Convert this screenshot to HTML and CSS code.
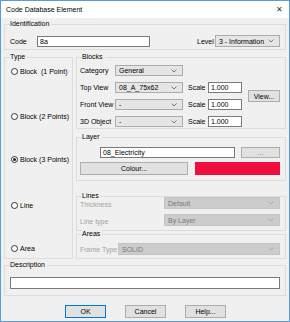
FILE: index.html
```html
<!DOCTYPE html>
<html>
<head>
<meta charset="utf-8">
<link rel="stylesheet" href="styles.css">
</head>
<body>
<div class="window">
  <div class="titlebar">
    <span class="title">Code Database Element</span>
    <span class="close">✕</span>
  </div>
  <div class="content">
    <div class="group ident">
      <span class="legend">Identification</span>
      <div class="row code-row">
        <span class="lbl code-lbl">Code</span>
        <div class="input code-input">8a</div>
        <span class="lbl level-lbl">Level</span>
        <div class="select level-select"><span>3 - Information</span><svg class="chev" viewBox="0 0 6 4"><path d="M0.5 0.5 L3 3 L5.5 0.5" /></svg></div>
      </div>
    </div>

    <div class="middle">
      <div class="group type">
        <span class="legend">Type</span>
        <label class="radio r1"><span class="dot"></span>Block&nbsp; (1 Point)</label>
        <label class="radio r2"><span class="dot"></span>Block (2 Points)</label>
        <label class="radio r3"><span class="dot on"></span>Block (3 Points)</label>
        <label class="radio r4"><span class="dot"></span>Line</label>
        <label class="radio r5"><span class="dot"></span>Area</label>
      </div>

      <div class="right">
        <div class="group blocks">
          <span class="legend">Blocks</span>
          <div class="bgrid">
            <span class="lbl">Category</span>
            <div class="select"><span>General</span><svg class="chev" viewBox="0 0 6 4"><path d="M0.5 0.5 L3 3 L5.5 0.5" /></svg></div>
            <span></span><span></span><span></span>

            <span class="lbl">Top View</span>
            <div class="select"><span>08_A_75x62</span><svg class="chev" viewBox="0 0 6 4"><path d="M0.5 0.5 L3 3 L5.5 0.5" /></svg></div>
            <span class="lbl scale">Scale</span>
            <div class="input">1.000</div>
            <div class="btn view">View...</div>

            <span class="lbl">Front View</span>
            <div class="select"><span>-</span><svg class="chev" viewBox="0 0 6 4"><path d="M0.5 0.5 L3 3 L5.5 0.5" /></svg></div>
            <span class="lbl scale">Scale</span>
            <div class="input">1.000</div>

            <span class="lbl">3D Object</span>
            <div class="select"><span>-</span><svg class="chev" viewBox="0 0 6 4"><path d="M0.5 0.5 L3 3 L5.5 0.5" /></svg></div>
            <span class="lbl scale">Scale</span>
            <div class="input">1.000</div>
          </div>
        </div>

        <div class="group layer">
          <span class="legend">Layer</span>
          <div class="row layer-row">
            <div class="input layer-input">08_Electricity</div>
            <div class="btn dots">...</div>
          </div>
          <div class="row colour-row">
            <div class="btn colour">Colour...</div>
            <div class="swatch"></div>
          </div>
        </div>

        <div class="group lines">
          <span class="legend">Lines</span>
          <div class="row lrow">
            <span class="lbl dis lines-lbl">Thickness</span>
            <div class="select disabled lines-sel"><span>Default</span><svg class="chev" viewBox="0 0 6 4"><path d="M0.5 0.5 L3 3 L5.5 0.5" /></svg></div>
          </div>
          <div class="row lrow second">
            <span class="lbl dis lines-lbl">Line type</span>
            <div class="select disabled lines-sel"><span>By Layer</span><svg class="chev" viewBox="0 0 6 4"><path d="M0.5 0.5 L3 3 L5.5 0.5" /></svg></div>
          </div>
        </div>

        <div class="group areas">
          <span class="legend">Areas</span>
          <div class="row arow">
            <span class="lbl dis areas-lbl">Frame Type</span>
            <div class="select disabled areas-sel"><span>SOLID</span><svg class="chev" viewBox="0 0 6 4"><path d="M0.5 0.5 L3 3 L5.5 0.5" /></svg></div>
          </div>
        </div>
      </div>
    </div>

    <div class="group desc">
      <span class="legend">Description</span>
      <div class="input desc-input"></div>
    </div>

    <div class="buttons">
      <div class="btn dlg ok">OK</div>
      <div class="btn dlg">Cancel</div>
      <div class="btn dlg">Help...</div>
    </div>
  </div>
</div>
</body>
</html>
```

FILE: styles.css
```css
* { box-sizing: border-box; }
html, body { margin: 0; padding: 0; background: #ffffff; }
body {
  font-family: "Liberation Sans", Arial, sans-serif;
  font-size: 7px;
  color: #000;
}
.window {
  width: 290px;
  height: 322px;
  border: 1px solid #5b9bd8;
  background: #f0f0f0;
  display: flex;
  flex-direction: column;
}
.titlebar {
  height: 17px;
  background: #ffffff;
  display: flex;
  align-items: center;
  justify-content: space-between;
  padding: 0 6px 0 5px;
  flex: none;
}
.title { font-size: 7px; color: #000; }
.close { font-size: 8px; color: #333; }
.content {
  flex: 1;
  padding: 0 3px;
  display: flex;
  flex-direction: column;
}
.group {
  position: relative;
  border: 1px solid #dcdcdc;
}
.legend {
  position: absolute;
  top: -5px;
  left: 5px;
  background: #f0f0f0;
  line-height: 8px;
  padding-right: 2px;
}
.row { display: flex; align-items: center; }
.lbl { line-height: 11px; white-space: nowrap; }
.dis { color: #a3a3a3; }
.input {
  background: #fff;
  border: 1px solid #7a7a7a;
  height: 11px;
  line-height: 9px;
  padding-left: 2px;
  white-space: nowrap;
  overflow: hidden;
}
.select {
  background: #e5e5e5;
  border: 1px solid #acacac;
  height: 12px;
  display: flex;
  align-items: center;
  justify-content: space-between;
  padding: 0 5px 0 3px;
  white-space: nowrap;
}
.select.disabled {
  background: #cccccc;
  border-color: #c4c4c4;
  color: #7a7a7a;
}
.chev { width: 6px; height: 4px; flex: none; }
.chev path { fill: none; stroke: #6a6a6a; stroke-width: 0.9; }
.select.disabled .chev path { stroke: #a8a8a8; }
.btn {
  background: #e1e1e1;
  border: 1px solid #adadad;
  display: flex;
  align-items: center;
  justify-content: center;
  white-space: nowrap;
}

/* identification */
.ident { margin-top: 6px; padding: 10px 5px 2px 5px; height: 26px; }
.code-lbl { width: 27px; }
.code-input { width: 113px; height: 11px; }
.level-lbl { margin-left: 47px; width: 18px; }
.level-select { width: 65px; }

/* middle */
.middle {
  margin-top: 7px;
  display: flex;
  gap: 3px;
}
.type {
  width: 69px;
  height: 202px;
  display: flex;
  flex-direction: column;
  padding-left: 6px;
}
.radio {
  display: flex;
  align-items: center;
  height: 10px;
  white-space: nowrap;
}
.dot {
  width: 7px;
  height: 7px;
  border: 1px solid #333;
  border-radius: 50%;
  background: #fff;
  margin-right: 2px;
  flex: none;
  display: flex;
  align-items: center;
  justify-content: center;
}
.dot.on::after {
  content: "";
  width: 3px;
  height: 3px;
  border-radius: 50%;
  background: #222;
}
.r1 { margin-top: 8px; }
.r2 { margin-top: 35px; }
.r3 { margin-top: 33px; }
.r4 { margin-top: 36px; }
.r5 { margin-top: 33px; }

.right {
  width: 210px;
  display: flex;
  flex-direction: column;
}
.blocks { height: 72px; padding: 7px 5px 0 3px; }
.bgrid {
  display: grid;
  grid-template-columns: 35px 68px 25px 34px 38px;
  grid-template-rows: 11px 11px 11px 11px;
  row-gap: 6px;
  align-items: center;
}
.bgrid .select { height: 11px; }
.bgrid .input { height: 11px; }
.scale { padding-left: 5px; }
.view {
  grid-column: 5;
  grid-row: 2 / 4;
  justify-self: end;
  width: 32px;
  height: 12px;
}

.layer { margin-top: 8px; height: 44px; padding: 9px 5px 0 3px; }
.layer-row { height: 11px; }
.layer-input { margin-left: 20px; width: 135px; }
.dots { margin-left: 6px; width: 39px; height: 11px; color: #6d6d6d; }
.colour-row { margin-top: 4px; height: 13px; }
.colour { width: 108px; height: 13px; }
.swatch { margin-left: 7px; width: 85px; height: 13px; background: #ef0e3d; }

.lines { margin-top: 15px; height: 35px; padding: 0 5px 0 3px; }
.lrow { height: 12px; }
.lrow.second { margin-top: 5px; }
.lines-lbl { width: 84px; padding-top: 2px; }
.lines-sel { width: 116px; }

.areas { margin-top: 3px; height: 25px; padding: 8px 5px 0 3px; }
.arow { height: 12px; }
.areas-lbl { width: 38px; }
.areas-sel { width: 162px; }

.desc { margin-top: 6px; height: 31px; padding: 11px 5px 0 5px; }
.desc-input { width: 270px; height: 12px; }

.buttons {
  margin-top: 9px;
  display: flex;
  padding-left: 61px;
  gap: 19px;
}
.dlg { width: 41px; height: 13px; }
.ok { border-color: #0078d7; }
```
